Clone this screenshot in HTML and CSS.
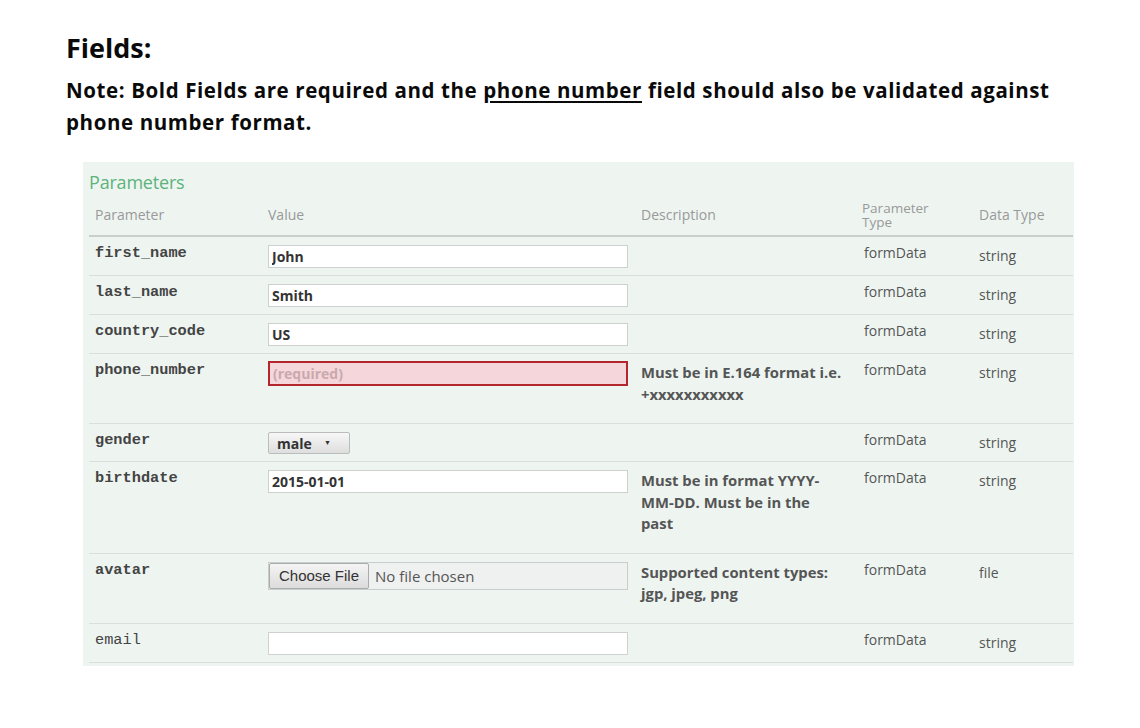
FILE: index.html
```html
<!DOCTYPE html>
<html>
<head>
<meta charset="utf-8">
<link rel="stylesheet" href="styles.css">
</head>
<body>
<div class="page">
  <h1 class="title">Fields:</h1>
  <p class="note">Note: Bold Fields are required and the <u>phone number</u> field should also be validated against phone number format.</p>

  <div class="panel">
    <h4 class="panel-title">Parameters</h4>
    <table class="params">
      <colgroup>
        <col class="c1"><col class="c2"><col class="c3"><col class="c4"><col class="c5">
      </colgroup>
      <thead>
        <tr>
          <th>Parameter</th>
          <th>Value</th>
          <th>Description</th>
          <th class="two">Parameter<br>Type</th>
          <th>Data Type</th>
        </tr>
      </thead>
      <tbody>
        <tr>
          <td class="code req">first_name</td>
          <td><input class="field" type="text" value="John"></td>
          <td class="desc"></td>
          <td class="pt">formData</td>
          <td class="dt">string</td>
        </tr>
        <tr>
          <td class="code req">last_name</td>
          <td><input class="field" type="text" value="Smith"></td>
          <td class="desc"></td>
          <td class="pt">formData</td>
          <td class="dt">string</td>
        </tr>
        <tr>
          <td class="code req">country_code</td>
          <td><input class="field" type="text" value="US"></td>
          <td class="desc"></td>
          <td class="pt">formData</td>
          <td class="dt">string</td>
        </tr>
        <tr>
          <td class="code req">phone_number</td>
          <td><input class="field error" type="text" placeholder="(required)"></td>
          <td class="desc"><p>Must be in E.164 format i.e. +xxxxxxxxxxx</p></td>
          <td class="pt">formData</td>
          <td class="dt">string</td>
        </tr>
        <tr>
          <td class="code req">gender</td>
          <td>
            <span class="select"><select><option>male</option><option>female</option></select></span>
          </td>
          <td class="desc"></td>
          <td class="pt">formData</td>
          <td class="dt">string</td>
        </tr>
        <tr>
          <td class="code req">birthdate</td>
          <td><input class="field" type="text" value="2015-01-01"></td>
          <td class="desc"><p>Must be in format YYYY-MM-DD. Must be in the past</p></td>
          <td class="pt">formData</td>
          <td class="dt">string</td>
        </tr>
        <tr>
          <td class="code req">avatar</td>
          <td>
            <div class="file"><button type="button" class="file-btn">Choose File</button><span class="file-name">No file chosen</span></div>
          </td>
          <td class="desc"><p>Supported content types: jgp, jpeg, png</p></td>
          <td class="pt">formData</td>
          <td class="dt">file</td>
        </tr>
        <tr>
          <td class="code">email</td>
          <td><input class="field" type="text" value=""></td>
          <td class="desc"></td>
          <td class="pt">formData</td>
          <td class="dt">string</td>
        </tr>
      </tbody>
    </table>
  </div>
</div>
</body>
</html>
```

FILE: styles.css
```css
html, body {
  margin: 0;
  padding: 0;
  background: #ffffff;
}

.page {
  padding: 29px 0 0 66px;
  font-family: "Open Sans", "Liberation Sans", sans-serif;
  color: #000;
}

.title {
  margin: 0;
  font-size: 27px;
  line-height: 38px;
  font-weight: 700;
  color: #0a0a0a;
}

.note {
  margin: 7px 0 0 0;
  width: 1000px;
  font-size: 20.5px;
  line-height: 32px;
  font-weight: 700;
  color: #0a0a0a;
  letter-spacing: 0.6px;
}

.note u {
  text-decoration-thickness: 2px;
  text-underline-offset: 3px;
}

.panel {
  margin: 24px 0 0 17px;
  width: 985px;
  padding: 7px 0 3px 6px;
  background: #eef5f1;
}

.panel-title {
  margin: 0;
  font-size: 18px;
  line-height: 26px;
  font-weight: 400;
  color: #5cb37c;
  letter-spacing: -0.2px;
}

.params {
  width: 984px;
  border-collapse: collapse;
  table-layout: fixed;
  font-family: "Open Sans", "Liberation Sans", sans-serif;
  font-size: 14px;
  color: #555;
}

.c1 { width: 173px; }
.c2 { width: 373px; }
.c3 { width: 221px; }
.c4 { width: 117px; }
.c5 { width: 100px; }

.params th {
  text-align: left;
  font-weight: 400;
  font-size: 14px;
  color: #999;
  line-height: 14px;
  padding: 5px 6px 6px 6px;
  vertical-align: middle;
  border-bottom: 2px solid #c9cfcc;
  height: 29px;
}

.params th.two {
  font-size: 13.5px;
  line-height: 14px;
}

.params td {
  padding: 7px 6px 7px 6px;
  vertical-align: top;
  line-height: 18px;
  border-bottom: 1px solid #d9dfdc;
}

.params td.pt {
  padding-left: 8px;
}

.params td.dt {
  padding-top: 10px;
}

.code {
  font-family: "Liberation Mono", "DejaVu Sans Mono", monospace;
  font-size: 15.3px;
  color: #444;
  font-weight: 400;
}

.code.req {
  font-weight: 700;
}

.params td.desc {
  font-weight: 700;
  font-size: 14.8px;
  padding-right: 12px;
}

.desc p {
  margin: 1px 0 11px 0;
  line-height: 21.5px;
}

.field {
  box-sizing: border-box;
  display: block;
  width: 360px;
  height: 23px;
  margin: 1px 0 0 0;
  padding: 0 3px;
  border: 1px solid #cdd1cf;
  background: #fff;
  font-family: "Open Sans", "Liberation Sans", sans-serif;
  font-size: 14px;
  font-weight: 700;
  color: #333;
  outline: none;
}

.field.error {
  height: 25px;
  margin-top: 0;
  border: 2px solid #b3272c;
  background: #f5d6da;
}

.field.error::placeholder {
  color: #c9a9ad;
  font-weight: 700;
}

.select {
  position: relative;
  display: inline-block;
  margin-top: 1px;
}

.select select {
  -webkit-appearance: none;
  appearance: none;
  box-sizing: border-box;
  width: 82px;
  height: 22px;
  padding: 0 0 0 8px;
  border: 1px solid #b9bdbb;
  border-radius: 2px;
  background: linear-gradient(#f7f7f7, #dedede);
  font-family: "Open Sans", "Liberation Sans", sans-serif;
  font-size: 14px;
  font-weight: 700;
  color: #333;
  outline: none;
}

.select::after {
  content: "\25BC";
  position: absolute;
  left: 56px;
  top: 7px;
  font-size: 7px;
  line-height: 8px;
  color: #333;
  pointer-events: none;
}

.file {
  box-sizing: border-box;
  display: flex;
  align-items: center;
  width: 360px;
  height: 28px;
  margin-top: 1px;
  border: 1px solid #c9cdcb;
  background: #eef1ef;
}

.file-btn {
  box-sizing: border-box;
  height: 26px;
  margin: 0;
  padding: 0 9px;
  border: 1px solid #a9acab;
  border-radius: 2px;
  background: linear-gradient(#f4f4f4, #dcdcdc);
  font-family: "Liberation Sans", "Open Sans", sans-serif;
  font-size: 15px;
  color: #333;
}

.file-name {
  margin-left: 6px;
  font-family: "Open Sans", "Liberation Sans", sans-serif;
  font-size: 15px;
  color: #555;
}
```
